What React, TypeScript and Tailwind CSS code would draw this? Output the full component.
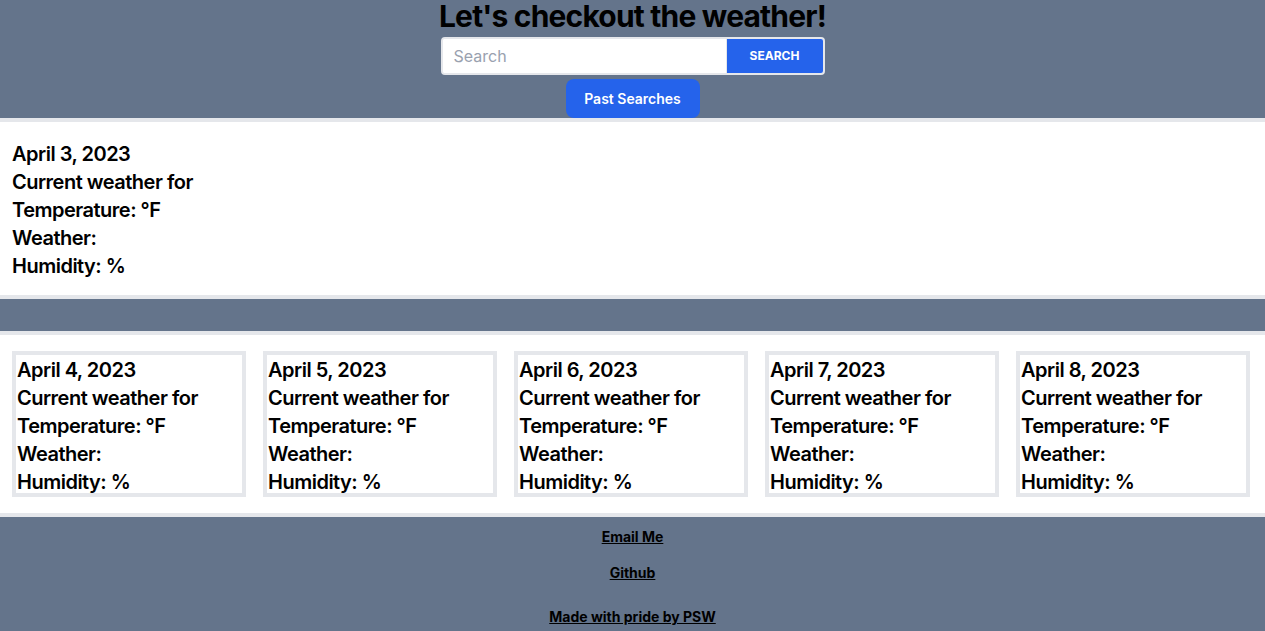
export default function App() {
  const days = ["April 4, 2023", "April 5, 2023", "April 6, 2023", "April 7, 2023", "April 8, 2023"];
  return (
    <div className="min-h-screen bg-[#64748b] text-black" style={{ fontFamily: "Inter, 'Noto Sans', sans-serif" }}>
      <header className="flex flex-col items-center bg-[#64748b]">
        <h1 className="text-[30px] font-bold leading-8 tracking-[-0.8px]">Let's checkout the weather!</h1>
        <div className="mt-[5px] flex h-[38px] w-[384px] overflow-hidden rounded border-2 border-gray-200 bg-white">
          <input
            className="h-full flex-1 bg-white px-[11px] text-base text-gray-800 outline-none placeholder:text-gray-400"
            placeholder="Search"
          />
          <button className="h-full w-[97px] border-l border-gray-200 bg-[#2563eb] text-xs font-bold uppercase text-white">
            Search
          </button>
        </div>
        <button className="mt-1 h-[39px] w-[134px] rounded-lg bg-[#2563eb] text-sm font-semibold text-white">
          Past Searches
        </button>
      </header>
      <section className="border-y-4 border-gray-200 bg-white pb-[15px] pl-3 pt-[18px] text-xl font-semibold leading-7 tracking-[-0.5px]">
        <div>April 3, 2023</div>
        <div>Current weather for</div>
        <div>Temperature: °F</div>
        <div>Weather:</div>
        <div>Humidity: %</div>
      </section>
      <div className="h-[32px] bg-[#64748b]" />
      <section className="grid grid-cols-5 gap-[17px] border-y-4 border-gray-200 bg-white py-4 pl-3 pr-[15px]">
        {days.map((d) => (
          <div key={d} className="h-[146px] border-4 border-gray-200 px-[1px] pt-[1px] text-xl font-semibold leading-7 tracking-[-0.5px]">
            <div>{d}</div>
            <div>Current weather for</div>
            <div>Temperature: °F</div>
            <div>Weather:</div>
            <div>Humidity: %</div>
          </div>
        ))}
      </section>
      <footer className="flex flex-col items-center bg-[#64748b] pb-6 pt-[10px] text-sm font-bold leading-5">
        <a className="underline" href="#">Email Me</a>
        <a className="mt-4 underline" href="#">Github</a>
        <p className="mt-6 underline">Made with pride by PSW</p>
      </footer>
    </div>
  );
}
